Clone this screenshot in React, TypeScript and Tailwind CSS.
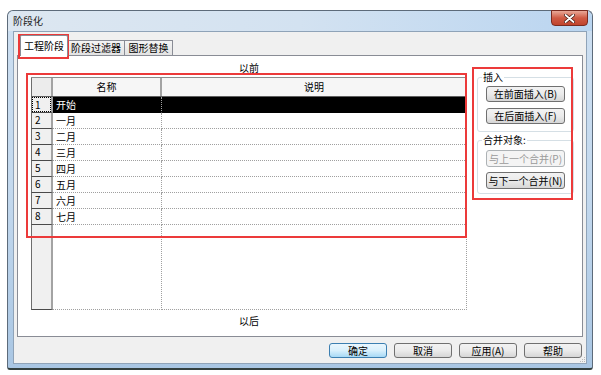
const rows = ['开始', '一月', '二月', '三月', '四月', '五月', '六月', '七月'];

function WinButton({ label, disabled, primary, className }: { label: string; disabled?: boolean; primary?: boolean; className?: string }) {
  const tone = disabled
    ? 'border-[#adb2b5] bg-[#f4f4f4] text-[#9a9a9a]'
    : primary
      ? 'border-[#3c7fb1] bg-gradient-to-b from-[#eaf6fd] via-[#d9f0fc] to-[#a7d9f5] text-black'
      : 'border-[#707070] bg-gradient-to-b from-[#f2f2f2] via-[#ebebeb] to-[#d6d6d6] text-black';
  return (
    <div className={`flex items-center justify-center rounded-[3px] border leading-[12px] ${tone} ${className ?? ''}`}>
      {label}
    </div>
  );
}

export default function App() {
  return (
    <div className="relative w-[601px] h-[375px] bg-white pt-[10px] pl-[7px] font-['Noto_Sans_CJK_SC',sans-serif] text-[10px] text-black">
      {/* window */}
      <div className="w-[586px] h-[360px] flex flex-col rounded-t-[6px] rounded-b-[3px] border border-[#5d6b7a] border-b-2 border-b-[#33403f] bg-gradient-to-b from-[#cddff1] via-[#c4d9ee] to-[#a9c6e3]">
        {/* title bar */}
        <div className="h-[20px] shrink-0 flex rounded-t-[6px] bg-gradient-to-r from-[#dde7f1] via-[#d3e2f1] to-[#bad5f0]">
          <span className="self-center pl-[5px] leading-[12px] text-[#1e1e1e]">阶段化</span>
          <div className="ml-auto mr-[4px] -mt-[1px] w-[37px] h-[16px] flex items-center justify-center rounded-b-[4px] border border-[#7a2b20] bg-gradient-to-b from-[#e8a898] via-[#cf5a44] to-[#c0442d]">
            <svg width="11" height="9" viewBox="0 0 11 9">
              <path d="M1.5 1 L9.5 8 M9.5 1 L1.5 8" stroke="#3a1510" strokeWidth="3.2" strokeLinecap="round" />
              <path d="M1.5 1 L9.5 8 M9.5 1 L1.5 8" stroke="#ffffff" strokeWidth="1.8" strokeLinecap="round" />
            </svg>
          </div>
        </div>

        {/* client area */}
        <div className="relative mx-[5px] mb-[4px] flex-1 flex flex-col border border-[#8fa3b8] bg-[#f0f0f0]">
          {/* tabs */}
          <div className="h-[23px] shrink-0 flex items-end pl-[6px]">
            <div className="relative z-10 -mb-px h-[21px] w-[48px] flex items-center justify-center border border-b-0 border-[#898c95] bg-white rounded-t-[2px] leading-[12px]">
              工程阶段
            </div>
            <div className="h-[15px] w-[57px] flex items-center justify-center border border-l-0 border-b-0 border-[#898c95] bg-gradient-to-b from-[#f3f3f3] to-[#e3e3e3] leading-[12px]">
              阶段过滤器
            </div>
            <div className="h-[15px] w-[48px] flex items-center justify-center border border-l-0 border-b-0 border-[#898c95] bg-gradient-to-b from-[#f3f3f3] to-[#e3e3e3] leading-[12px]">
              图形替换
            </div>
          </div>

          {/* tab panel */}
          <div className="mx-[3px] h-[282px] shrink-0 flex border border-[#898c95] bg-white">
            {/* grid column */}
            <div className="ml-[13px] w-[436px] flex flex-col">
              <div className="h-[21px] pt-[6px] text-center leading-[12px]">以前</div>
              <div className="h-[233px] flex flex-col">
                {/* header */}
                <div className="h-[20px] flex border-t border-[#8c8c8c] border-b border-b-[#5f5f5f] bg-[#f6f6f6]">
                  <div className="w-[22px] border-l border-[#6d6d6d] border-r-2 border-r-[#a3a3a3] bg-[#ececec]" />
                  <div className="w-[109px] flex items-center justify-center border-r-2 border-[#a3a3a3] leading-[12px]">名称</div>
                  <div className="flex-1 flex items-center justify-center border-r border-[#a3a3a3] leading-[12px]">说明</div>
                </div>
                {/* rows */}
                {rows.map((name, i) => {
                  const sel = i === 0;
                  return (
                    <div key={name} className="h-[16px] flex">
                      <div className="w-[22px] border-l border-[#6d6d6d] border-r-2 border-r-[#a3a3a3] border-b border-b-[#4a4a4a] bg-[#f0f0f0]">
                        <div className={`h-full pl-[2px] leading-[14px] ${sel ? 'border border-dotted border-black' : 'pl-[3px]'}`}>{i + 1}</div>
                      </div>
                      <div className={`w-[109px] pl-[3px] leading-[15px] border-b border-r border-dotted border-[#a0a0a0] ${sel ? 'bg-black text-white border-b-black' : ''}`}>
                        {name}
                      </div>
                      <div className={`flex-1 border-b border-r border-dotted border-[#a0a0a0] ${sel ? 'bg-black border-b-black' : ''}`} />
                    </div>
                  );
                })}
                {/* empty area */}
                <div className="flex-1 flex">
                  <div className="w-[22px] border-l border-[#6d6d6d] border-r-2 border-r-[#a3a3a3] border-b border-b-[#4a4a4a] bg-[#f0f0f0]" />
                  <div className="w-[109px] border-b border-r border-dotted border-[#a0a0a0]" />
                  <div className="flex-1 border-b border-r border-dotted border-[#a0a0a0]" />
                </div>
              </div>
              <div className="mt-[5px] text-center leading-[12px]">以后</div>
            </div>

            {/* right column */}
            <div className="ml-[10px] w-[94px] flex flex-col">
              <fieldset className="mt-[14px] rounded-[3px] border border-[#d5dfe5] px-[8px] pb-[7px]">
                <legend className="-ml-[4px] px-[1px] leading-[14px]">插入</legend>
                <WinButton label="在前面插入(B)" className="mt-[2px] w-[79px] h-[16px]" />
                <WinButton label="在后面插入(F)" className="mt-[6px] w-[79px] h-[16px]" />
              </fieldset>
              <fieldset className="mt-[1px] rounded-[3px] border border-[#d5dfe5] px-[8px] pb-[4px]">
                <legend className="-ml-[4px] px-[1px] leading-[14px]">合并对象:</legend>
                <WinButton label="与上一个合并(P)" disabled className="mt-[3px] w-[79px] h-[17px]" />
                <WinButton label="与下一个合并(N)" className="mt-[5px] w-[79px] h-[17px]" />
              </fieldset>
            </div>
          </div>

          {/* bottom buttons */}
          <div className="flex justify-end gap-[7px] pt-[6px] pr-[4px]">
            <WinButton label="确定" primary className="w-[58px] h-[15px]" />
            <WinButton label="取消" className="w-[58px] h-[15px]" />
            <WinButton label="应用(A)" className="w-[58px] h-[15px]" />
            <WinButton label="帮助" className="w-[58px] h-[15px]" />
          </div>

          {/* size grip */}
          <svg className="absolute right-0 bottom-0" width="6" height="6" viewBox="0 0 6 6">
            <rect x="4" y="0" width="1" height="1" fill="#b8b8b8" />
            <rect x="2" y="2" width="1" height="1" fill="#b8b8b8" />
            <rect x="4" y="2" width="1" height="1" fill="#b8b8b8" />
            <rect x="0" y="4" width="1" height="1" fill="#b8b8b8" />
            <rect x="2" y="4" width="1" height="1" fill="#b8b8b8" />
            <rect x="4" y="4" width="1" height="1" fill="#b8b8b8" />
          </svg>
        </div>
      </div>

      {/* red annotation boxes */}
      <div className="absolute left-[18px] top-[34px] w-[51px] h-[25px] border-2 border-[#ec3a3a]" />
      <div className="absolute left-[26px] top-[73px] w-[441px] h-[165px] border-2 border-[#ec3a3a]" />
      <div className="absolute left-[472px] top-[67px] w-[101px] h-[133px] border-2 border-[#ec3a3a]" />
    </div>
  );
}
